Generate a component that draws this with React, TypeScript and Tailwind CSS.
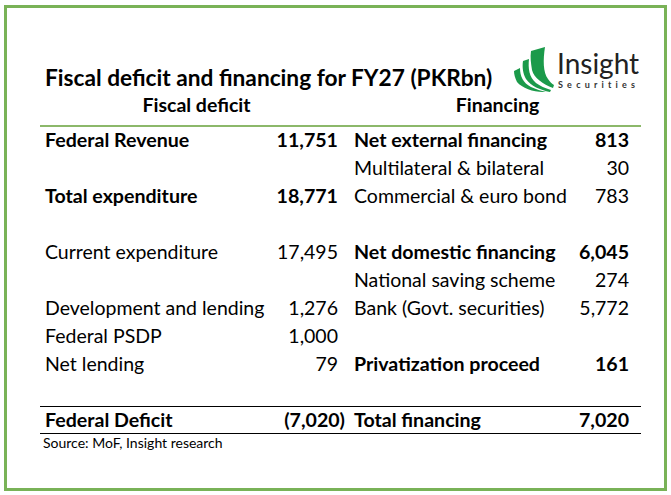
import React from "react";

type Row = {
  l?: string;
  lv?: string;
  lb?: boolean;
  r?: string;
  rv?: string;
  rb?: boolean;
};

const rows: Row[] = [
  { l: "Federal Revenue", lv: "11,751", lb: true, r: "Net external financing", rv: "813", rb: true },
  { r: "Multilateral & bilateral", rv: "30" },
  { l: "Total expenditure", lv: "18,771", lb: true, r: "Commercial & euro bond", rv: "783" },
  {},
  { l: "Current expenditure", lv: "17,495", r: "Net domestic financing", rv: "6,045", rb: true },
  { r: "National saving scheme", rv: "274" },
  { l: "Development and lending", lv: "1,276", r: "Bank (Govt. securities)", rv: "5,772" },
  { l: "Federal PSDP", lv: "1,000" },
  { l: "Net lending", lv: "79", r: "Privatization proceed", rv: "161", rb: true },
  {},
];

function Logo() {
  return (
    <svg width="42" height="46" viewBox="0 0 42 46" className="block shrink-0">
      <path
        fill="#1b9a4a"
        d="M19 5 L33 1 C31 14 31 26 36 33 C38 36 40 38 42 39 L41 42 C31 38 22 32 20 24 C19 18 18 11 19 5 Z"
      />
      <path
        fill="#1b9a4a"
        d="M11 15 L17 13 C16 22 17 31 24 37 C28 40 33 42 39 44 L38 46 C28 44 19 40 14 33 C11 28 10 21 11 15 Z"
      />
      <path
        fill="#1b9a4a"
        d="M2 25 L8 22 C8 30 11 37 19 41 C24 43 29 45 34 46 L31 46 C21 46 10 42 5 36 C3 32 2 28 2 25 Z"
      />
    </svg>
  );
}

const bold = "font-bold text-[19.6px]";
const reg = "font-normal text-[19.5px]";

function Cells({ row }: { row: Row }) {
  return (
    <>
      <div className={`pl-[5px] whitespace-nowrap ${row.lb ? bold : reg}`}>{row.l ?? ""}</div>
      <div className={`text-right pr-[7px] whitespace-nowrap ${row.lb ? bold : reg}`}>{row.lv ?? ""}</div>
      <div className={`pl-[9px] whitespace-nowrap ${row.rb ? bold : reg}`}>{row.r ?? ""}</div>
      <div className={`text-right pr-[12px] whitespace-nowrap ${row.rb ? bold : reg}`}>{row.rv ?? ""}</div>
    </>
  );
}

export default function App() {
  return (
    <div
      className="w-[671px] h-[495px] bg-white pt-[5px] pl-[4px] text-black"
      style={{ fontFamily: "Lato, 'Liberation Sans', sans-serif" }}
    >
      <div className="w-[663px] h-[486px] border-[3px] border-[#79b257] pl-[33px] pt-[38px]">
        <div className="w-[601px]">
          <div className="flex justify-between items-end h-[46px]">
            <div className="text-[22.7px] font-bold leading-[28px] pl-[5px] whitespace-nowrap">
              Fiscal deficit and financing for FY27 (PKRbn)
            </div>
            <div className="flex items-start h-[46px] w-[129px]">
              <Logo />
              <div className="ml-[3px] flex flex-col text-[#222]">
                <div className="text-[28px] leading-[28px] font-normal mt-[3px] tracking-[0px]">Insight</div>
                <div className="text-[9px] leading-[10px] tracking-[4.2px] mt-[3px] pl-[1px] font-bold text-[#333]">
                  Securities
                </div>
              </div>
            </div>
          </div>
          <div className="grid grid-cols-[305px_296px] h-[35px] items-start pt-[1px] font-bold text-[19.5px] leading-[24px] border-b-[2px] border-[#8cb86a]">
            <div className="text-center pl-[8px]">Fiscal deficit</div>
            <div className="text-center pl-[9px]">Financing</div>
          </div>
          <div className="grid grid-cols-[220px_85px_215px_81px] auto-rows-[28px] items-start leading-[24px] pt-[0.5px]">
            {rows.map((r, i) => (
              <Cells key={i} row={r} />
            ))}
          </div>
          <div className="grid grid-cols-[220px_85px_215px_81px] h-[28px] items-start pt-[1px] text-[19.6px] leading-[24px] font-bold border-t border-b border-black mt-[-1.5px]">
            <div className="pl-[5px] whitespace-nowrap">Federal Deficit</div>
            <div className="text-right whitespace-nowrap">(7,020)</div>
            <div className="pl-[9px] whitespace-nowrap">Total financing</div>
            <div className="text-right pr-[12px] whitespace-nowrap">7,020</div>
          </div>
          <div className="pl-[3px] text-[14px] leading-[18px] whitespace-nowrap">Source: MoF, Insight research</div>
        </div>
      </div>
    </div>
  );
}
